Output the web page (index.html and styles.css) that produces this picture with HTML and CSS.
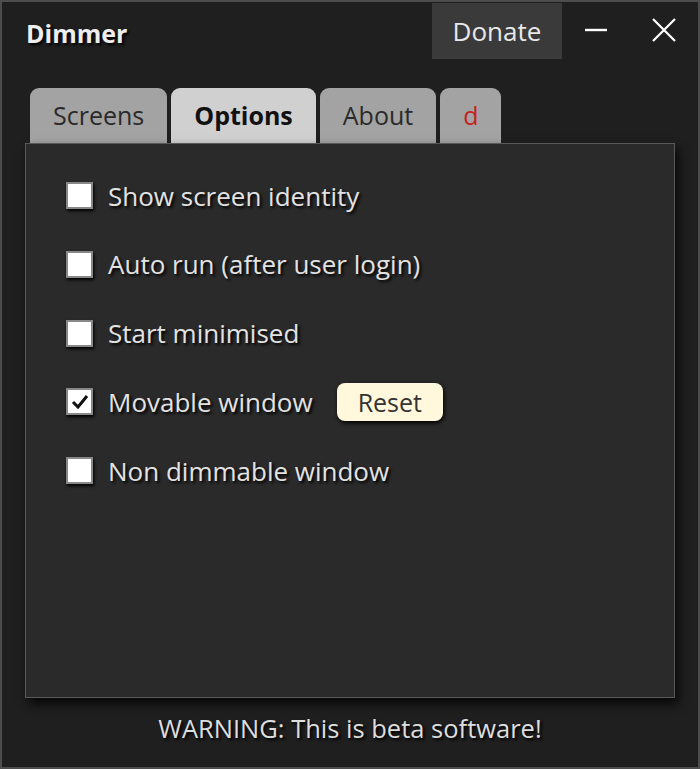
FILE: index.html
```html
<!DOCTYPE html>
<html lang="en">
  <head>
    <meta charset="UTF-8" />
    <title>Dimmer</title>
    <link rel="stylesheet" href="styles.css">
  </head>
  <body>
    <div class="window">
      <header class="titlebar">
        <div class="title">Dimmer</div>
        <button class="donate">Donate</button>
        <button class="win-btn" title="Minimise">
          <svg width="24" height="24" viewBox="0 0 24 24"><line x1="1" y1="12" x2="23" y2="12" stroke="#fff" stroke-width="2.4"/></svg>
        </button>
        <button class="win-btn" title="Close">
          <svg width="24" height="24" viewBox="0 0 24 24"><path d="M1 1 L23 23 M23 1 L1 23" stroke="#fff" stroke-width="2.2" fill="none"/></svg>
        </button>
      </header>

      <div class="tabs">
        <div class="tab">Screens</div>
        <div class="tab active">Options</div>
        <div class="tab">About</div>
        <div class="tab tab-d">d</div>
      </div>

      <div class="panel">
        <label class="option"><span class="box"></span>Show screen identity</label>
        <label class="option"><span class="box"></span>Auto run (after user login)</label>
        <label class="option"><span class="box"></span>Start minimised</label>
        <label class="option">
          <span class="box checked">
            <svg width="20" height="20" viewBox="0 0 20 20"><path d="M3 10 L8 15 L17 4" stroke="#111" stroke-width="3" fill="none"/></svg>
          </span>Movable window
          <button class="reset">Reset</button>
        </label>
        <label class="option"><span class="box"></span>Non dimmable window</label>
      </div>

      <div class="warning">WARNING: This is beta software!</div>
    </div>
  </body>
</html>
```

FILE: styles.css
```css
html,
body {
  margin: 0;
  padding: 0;
  background: #1f1f1f;
}
body {
  font-family: "Open Sans", "Noto Sans", sans-serif;
  color: #e6e6e6;
}
.window {
  width: 700px;
  height: 769px;
  box-sizing: border-box;
  border: 2px solid #4d4d4d;
  background: #1f1f1f;
  display: flex;
  flex-direction: column;
}
.titlebar {
  display: flex;
  align-items: flex-start;
  height: 57px;
  padding-left: 24px;
}
.title {
  flex: 1;
  font-size: 25px;
  font-weight: bold;
  color: #eee;
  padding-top: 14px;
  text-shadow: 2px 2px 3px #000;
}
button {
  font-family: inherit;
  border: none;
  cursor: pointer;
}
.donate {
  background: #3a3a3a;
  color: #e8e8e8;
  font-size: 26px;
  width: 130px;
  height: 56px;
  margin-top: 1px;
}
.win-btn {
  background: transparent;
  width: 68px;
  height: 56px;
  padding: 0;
  display: flex;
  align-items: center;
  justify-content: center;
}
.tabs {
  display: flex;
  gap: 4px;
  margin-top: 29px;
  padding-left: 28px;
}
.tab {
  height: 55px;
  box-sizing: border-box;
  padding: 0 23px;
  line-height: 55px;
  font-size: 25px;
  color: #2a2a2a;
  background: #a3a3a3;
  border-radius: 9px 9px 0 0;
}
.tab.active {
  background: #d0d0d0;
  color: #111;
  font-weight: bold;
}
.tab-d {
  color: #c62020;
  padding: 0 23px;
}
.panel {
  margin: 0 23px 0 23px;
  height: 555px;
  box-sizing: border-box;
  background: #2a2a2a;
  border: 1px solid #595959;
  box-shadow: 3px 6px 10px rgba(0, 0, 0, 0.8);
  padding: 37px 0 0 40px;
  display: flex;
  flex-direction: column;
  gap: 39.75px;
}
.option {
  display: flex;
  align-items: center;
  height: 29px;
  font-size: 26px;
  color: #e2e2e2;
  text-shadow: 2px 2px 3px #000;
}
.box {
  width: 27px;
  height: 27px;
  box-sizing: border-box;
  background: #fff;
  border: 2px solid #888;
  box-shadow: 1px 2px 3px #000;
  margin-right: 15px;
  display: flex;
  align-items: center;
  justify-content: center;
}
.reset {
  margin-left: 24px;
  background: #fff8dc;
  color: #333;
  font-size: 25px;
  padding: 0 21px;
  height: 38px;
  border-radius: 8px;
  box-shadow: 1px 2px 4px #000;
  text-shadow: none;
}
.warning {
  text-align: center;
  font-size: 25.5px;
  color: #ddd;
  margin-top: 13px;
  text-shadow: 2px 2px 3px #000;
}
```
